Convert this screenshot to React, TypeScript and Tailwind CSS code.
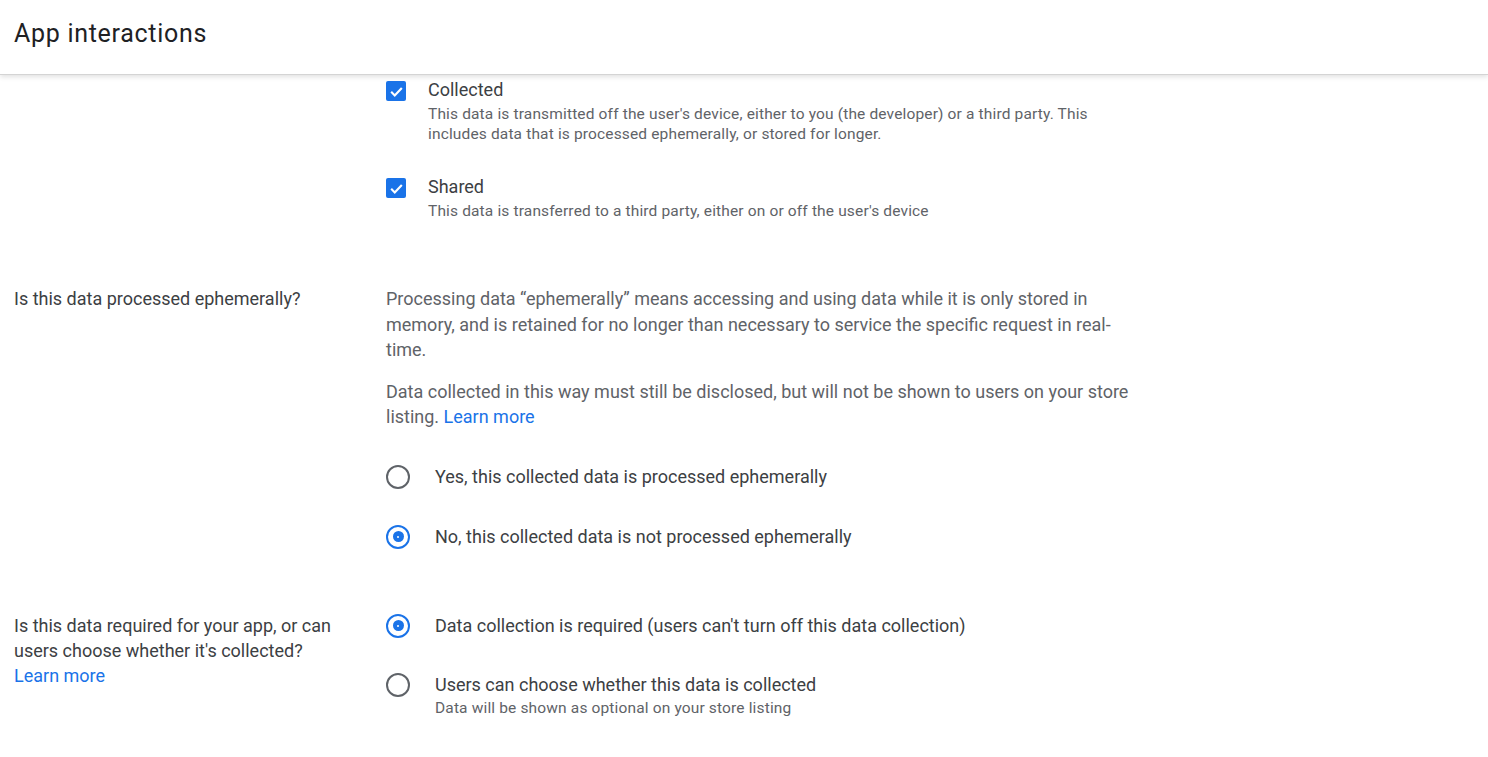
import React from "react";

const font = { fontFamily: "Roboto, 'Liberation Sans', sans-serif" };

function Checkbox() {
  return (
    <div className="w-[20px] h-[20px] rounded-[2px] bg-[#1a73e8] flex items-center justify-center shrink-0">
      <svg width="17" height="17" viewBox="0 0 24 24">
        <path d="M4.5 12.5l5 5L19.5 7" fill="none" stroke="white" strokeWidth="3" />
      </svg>
    </div>
  );
}

function Radio({ checked }: { checked?: boolean }) {
  return (
    <div
      className={
        "w-[24px] h-[24px] rounded-full border-2 flex items-center justify-center shrink-0 " +
        (checked ? "border-[#1a73e8]" : "border-[#5f6368]")
      }
    >
      {checked && (
        <div className="w-[11px] h-[11px] rounded-full bg-[#1a73e8] flex items-center justify-center">
          <div className="w-[2px] h-[2px] rounded-full bg-white" />
        </div>
      )}
    </div>
  );
}

export default function App() {
  return (
    <div className="min-h-screen bg-white text-[#3c4043]" style={font}>
      <header className="h-[75px] border-b border-[#d4d4d4] shadow-[0_2px_5px_rgba(0,0,0,0.12)] pl-[14px] pt-[18px]">
        <h1 className="text-[25px] leading-[32px] text-[#202124] tracking-[0.7px]">App interactions</h1>
      </header>

      <main className="pl-[14px]">
        {/* Collected / Shared */}
        <div className="grid grid-cols-[372px_752px] pt-[2px]">
          <div />
          <div className="flex flex-col gap-[30px]">
            <div className="flex">
              <div className="pt-[4px] w-[42px]">
                <Checkbox />
              </div>
              <div>
                <div className="text-[18px] leading-[26px] text-[#3c4043]">Collected</div>
                <div className="mt-[1px] text-[15.5px] leading-[20px] text-[#5f6368] tracking-[0.15px] max-w-[700px]">
                  This data is transmitted off the user's device, either to you (the developer) or a third party. This includes data that is processed ephemerally, or stored for longer.
                </div>
              </div>
            </div>
            <div className="flex">
              <div className="pt-[4px] w-[42px]">
                <Checkbox />
              </div>
              <div>
                <div className="text-[18px] leading-[26px] text-[#3c4043]">Shared</div>
                <div className="mt-[1px] text-[15.5px] leading-[20px] text-[#5f6368] tracking-[0.15px]">
                  This data is transferred to a third party, either on or off the user's device
                </div>
              </div>
            </div>
          </div>
        </div>

        {/* Ephemeral */}
        <div className="grid grid-cols-[372px_752px] mt-[65px]">
          <div className="text-[18px] leading-[25.5px] text-[#3c4043] pr-[30px]">
            Is this data processed ephemerally?
          </div>
          <div>
            <p className="text-[18px] leading-[25.5px] text-[#5f6368]">
              Processing data “ephemerally” means accessing and using data while it is only stored in memory, and is retained for no longer than necessary to service the specific request in real-time.
            </p>
            <p className="text-[18px] leading-[25.5px] text-[#5f6368] mt-[16px]">
              Data collected in this way must still be disclosed, but will not be shown to users on your store listing.{" "}
              <span className="text-[#1a73e8]">Learn more</span>
            </p>
            <div className="mt-[17px] flex flex-col">
              <div className="h-[60px] flex items-center">
                <div className="w-[49px]">
                  <Radio />
                </div>
                <span className="text-[18px] text-[#3c4043]">Yes, this collected data is processed ephemerally</span>
              </div>
              <div className="h-[60px] flex items-center">
                <div className="w-[49px]">
                  <Radio checked />
                </div>
                <span className="text-[18px] text-[#3c4043]">No, this collected data is not processed ephemerally</span>
              </div>
            </div>
          </div>
        </div>

        {/* Required */}
        <div className="grid grid-cols-[372px_752px] mt-[46px]">
          <div className="text-[18px] leading-[25px] text-[#3c4043] pr-[30px]">
            Is this data required for your app, or can users choose whether it's collected?
            <div className="text-[#1a73e8]">Learn more</div>
          </div>
          <div className="flex flex-col gap-[33px]">
            <div className="flex items-center h-[26px]">
              <div className="w-[49px]">
                <Radio checked />
              </div>
              <span className="text-[18px] text-[#3c4043]">
                Data collection is required (users can't turn off this data collection)
              </span>
            </div>
            <div className="flex">
              <div className="w-[49px] pt-[1px]">
                <Radio />
              </div>
              <div>
                <div className="text-[18px] leading-[26px] text-[#3c4043]">Users can choose whether this data is collected</div>
                <div className="text-[15.5px] leading-[20px] text-[#5f6368] tracking-[0.15px]">
                  Data will be shown as optional on your store listing
                </div>
              </div>
            </div>
          </div>
        </div>
      </main>
    </div>
  );
}
